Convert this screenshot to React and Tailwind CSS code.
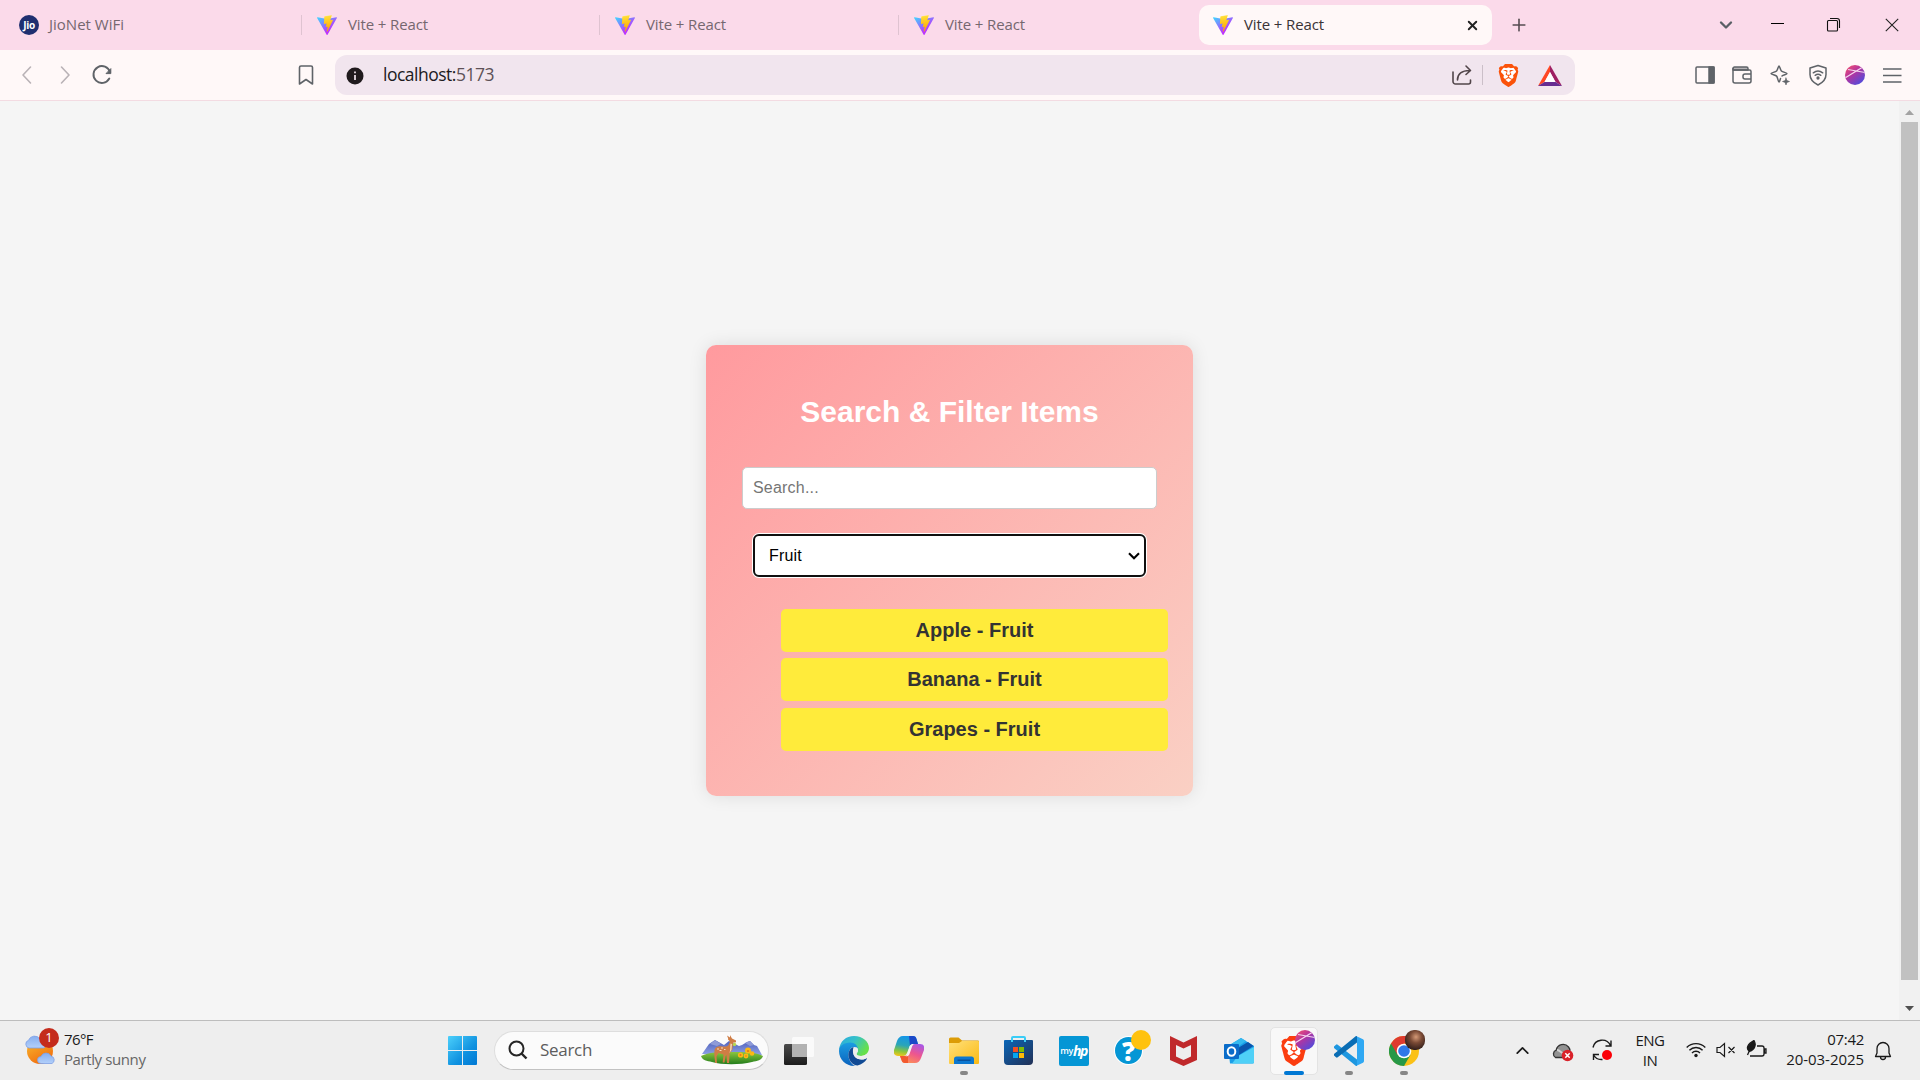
import React from "react";
import { SiBrave } from "react-icons/si";
import { ChevronDown, ChevronUp, Plus, X } from "lucide-react";

function ViteLogo() {
  return (
    <svg width="20" height="20" viewBox="0 0 256 257" className="shrink-0">
      <defs>
        <linearGradient id="va" x1="-.8%" x2="57.6%" y1="7.7%" y2="78.4%">
          <stop offset="0%" stopColor="#41D1FF" />
          <stop offset="100%" stopColor="#BD34FE" />
        </linearGradient>
        <linearGradient id="vb" x1="43.4%" x2="50.3%" y1="2.2%" y2="89%">
          <stop offset="0%" stopColor="#FFEA83" />
          <stop offset="8.3%" stopColor="#FFDD35" />
          <stop offset="100%" stopColor="#FFA800" />
        </linearGradient>
      </defs>
      <path fill="url(#va)" d="M255.153 37.938L134.897 252.976c-2.483 4.44-8.862 4.466-11.382.048L.875 37.958c-2.746-4.814 1.371-10.646 6.827-9.67l120.385 21.517a6.537 6.537 0 0 0 2.322-.004l117.867-21.483c5.438-.991 9.574 4.796 6.877 9.62Z" />
      <path fill="url(#vb)" d="M185.432.063L96.44 17.501a3.268 3.268 0 0 0-2.634 3.014l-5.474 92.456a3.268 3.268 0 0 0 3.997 3.378l24.777-5.718c2.318-.535 4.413 1.507 3.936 3.838l-7.361 36.047c-.495 2.426 1.782 4.5 4.151 3.78l15.304-4.649c2.372-.72 4.652 1.36 4.15 3.788l-11.698 56.621c-.732 3.542 3.979 5.473 5.943 2.437l1.313-2.028l72.516-144.72c1.215-2.423-.88-5.186-3.54-4.672l-25.505 4.922c-2.396.462-4.435-1.77-3.759-4.114l16.646-57.705c.677-2.35-1.37-4.583-3.769-4.113Z" />
    </svg>
  );
}

function TabBar() {
  return (
    <div className="flex h-[50px] items-center bg-[#fbdaea] text-[15px] tracking-[-0.12px] text-[#75676f]">
      <div className="flex w-[301px] items-center pl-[19px]">
        <div className="flex size-5 items-center justify-center rounded-full bg-[#1f2f70] text-[10px] font-bold tracking-[-0.3px] text-white">Jio</div>
        <span className="mb-[2px] ml-[10px] tracking-normal">JioNet WiFi</span>
      </div>
      {[0, 1, 2].map((i) => (
        <div key={i} className={i === 0 ? "flex w-[298px] items-center" : "flex w-[299px] items-center"}>
          <div className="h-5 w-px bg-[#dfc3d1]" />
          <div className="ml-[15px]"><ViteLogo /></div>
          <span className="mb-[2px] ml-[11px]">Vite + React</span>
        </div>
      ))}
      <div className="ml-[2px] flex h-10 w-[293px] items-center rounded-[10px] bg-[#fff8f8] pl-[14px] pr-[12px] text-[#3a3336]">
        <ViteLogo />
        <span className="mb-[2px] ml-[11px]">Vite + React</span>
        <X className="ml-auto size-[15px] text-[#222]" strokeWidth={3} />
      </div>
      <Plus className="ml-[17px] size-5 text-[#554c51]" strokeWidth={1.9} />
      <ChevronDown className="ml-[187px] size-5 text-[#5a5f66]" strokeWidth={2.8} />
      <div className="ml-[35px] mb-[3px] h-px w-[13px] bg-black" />
      <svg className="mb-[2px] ml-[42px]" width="15" height="15" viewBox="0 0 15 15" fill="none" stroke="#111" strokeWidth="1.100">
        <rect x="1.500" y="3.500" width="10" height="10.500" rx="1" />
        <path d="M4 1.500h7a2.500 2.500 0 0 1 2.500 2.500v7" />
      </svg>
      <svg className="mb-[1px] ml-[44px]" width="14" height="14" viewBox="0 0 14 14" stroke="#222" strokeWidth="1.1">
        <path d="M.8.8l12.4 12.4M13.2.8L.8 13.2" />
      </svg>
    </div>
  );
}

const line = { fill: "none", stroke: "#5f6368", strokeWidth: 1.6, strokeLinecap: "round", strokeLinejoin: "round" };
function Ic({ className, children, ...p }) {
  return (
    <svg width="24" height="24" viewBox="0 0 24 24" {...line} {...p} className={"shrink-0 " + (className || "")}>
      {children}
    </svg>
  );
}

function Avatar({ size, id }) {
  return (
    <svg width={size} height={size} viewBox="0 0 20 20" className="shrink-0">
      <defs>
        <linearGradient id={id} x1="0" y1="0" x2=".8" y2="1">
          <stop offset="0" stopColor="#fb5468" />
          <stop offset=".45" stopColor="#b4349f" />
          <stop offset="1" stopColor="#4a4de0" />
        </linearGradient>
        <clipPath id={id + "c"}><circle cx="10" cy="10" r="10" /></clipPath>
      </defs>
      <g clipPath={`url(#${id}c)`}>
        <rect width="20" height="20" fill={`url(#${id})`} />
        <path d="M0 13L17 2.500M3 4.500L20 7.500" stroke="#f3d3ee" strokeWidth="1.200" />
      </g>
    </svg>
  );
}

function Toolbar() {
  return (
    <div className="flex h-[51px] items-center border-b border-[#f3dbe2] bg-[#fff8f8]">
      <Ic className="ml-[15px]" stroke="#b9b2b6"><path d="M15.500 4L8 12l7.500 8" /></Ic>
      <Ic className="ml-[14px]" stroke="#b9b2b6"><path d="M8.500 4L16 12l-7.500 8" /></Ic>
      <Ic className="ml-[13px]" strokeWidth="1.900">
        <path d="M19.300 15.500A8.400 8.400 0 1 1 20 9.300" />
        <path d="M20.800 6v4.600h-4.400z" fill="#5f6368" strokeWidth="1" />
      </Ic>
      <Ic className="ml-[180px]"><path d="M5.500 4.500A1.500 1.500 0 0 1 7 3h10a1.500 1.500 0 0 1 1.500 1.500V21L12 16.500 5.500 21z" /></Ic>
      <div className="ml-[17px] flex h-10 w-[1240px] items-center rounded-[12px] bg-[#f1e5ee]">
        <svg className="ml-[11px] mt-[2px]" width="18" height="18" viewBox="0 0 18 18">
          <circle cx="9" cy="9" r="8.500" fill="#201a1d" />
          <path d="M9 8v5M9 4.600v1.700" stroke="#f1e5ee" strokeWidth="1.700" />
        </svg>
        <span className="mb-[1px] ml-[19px] text-[17.500px] tracking-[-0.500px] text-[#201a1d]">localhost:<span className="text-[#5d5157]">5173</span></span>
        <Ic className="ml-auto" stroke="#514549">
          <path d="M3 9v9.500A2.500 2.500 0 0 0 5.500 21h13a2 2 0 0 0 2-2v-2M7.500 17c0-6 4.500-9.500 12-9.500M16 3l4.500 4.500L16 11.500" />
        </Ic>
        <div className="ml-[8px] h-5 w-px bg-[#cbbfc8]" />
        <div className="ml-[15px] flex h-[23px] w-5 items-center justify-center">
          <div className="flex h-[19px] w-[15px] items-center justify-center rounded-b-[9px] rounded-t-[4px] bg-white">
            <SiBrave className="size-[23px] shrink-0 text-[#fb5209]" />
          </div>
        </div>
        <svg className="ml-[20px] mr-[13px]" width="24" height="21" viewBox="0 0 24 21">
          <path d="M12 0L0 21l6.500-4L12 7z" fill="#ff4724" />
          <path d="M12 0v7l5.500 10L24 21z" fill="#9e1f63" />
          <path d="M0 21h24l-6.500-4h-11z" fill="#662d91" />
          <path d="M12 7l5.500 10h-11z" fill="#fff" />
        </svg>
      </div>
      <Ic className="ml-[118px]" strokeWidth="1.500">
        <rect x="3" y="4" width="18" height="16" rx="1" />
        <path d="M16 4h5v16h-5z" fill="#5f6368" />
      </Ic>
      <Ic className="ml-[13px]" strokeWidth="1.500">
        <path d="M3 5.500A1.500 1.500 0 0 1 4.500 4h12A1.500 1.500 0 0 1 18 5.500V7H3z" fill="#b5b2b5" />
        <path d="M3 5.500V18a2 2 0 0 0 2 2h14a2 2 0 0 0 2-2V8.500A1.500 1.500 0 0 0 19.500 7H4M21 11h-6a2 2 0 0 0-2 2v1a2 2 0 0 0 2 2h6" />
      </Ic>
      <Ic className="ml-[14px]" strokeWidth="1.500">
        <path d="M11 3c.8 0 1.200 3.800 2.400 5 1.200 1.200 5.600 1.600 5.600 2.500 0 1-3.800 1.300-5 2.500M11 3c-.8 0-1.200 3.800-2.400 5C7.400 9.200 3 9.600 3 10.500c0 1 4.400 1.400 5.600 2.600C9.800 14.300 10 19 11 19c.7 0 .9-1.800 1.500-3.500" />
        <path d="M18 15l.9 2.600 2.600.9-2.600.9L18 22l-.9-2.600-2.600-.9 2.600-.9z" fill="#5f6368" strokeWidth=".6" />
      </Ic>
      <Ic className="ml-[14px]" strokeWidth="1.500">
        <path d="M12 2.500L20 5v6.500c0 4.500-3 8-8 10.500-5-2.500-8-6-8-10.500V5z" />
        <path d="M7.300 9.800a8 8 0 0 1 9.400 0M9.200 12.300a5 5 0 0 1 5.600 0" />
        <circle cx="12" cy="15" r=".9" fill="#5f6368" />
      </Ic>
      <div className="ml-[15px]"><Avatar size={20} id="av1" /></div>
      <Ic className="ml-[15px] mt-[2px]" strokeWidth="1.700" strokeLinecap="butt"><path d="M3 5h18.500M3 11.500h18.500M3 18h18.500" /></Ic>
    </div>
  );
}

function Content() {
  return (
    <div className="flex h-[919px] bg-[#f5f5f5] font-['Liberation_Sans',Arial,sans-serif]">
      <div className="flex flex-1 flex-col items-center pt-[244px]">
        <div className="h-[451px] w-[487px] rounded-[10px] bg-[linear-gradient(135deg,#ff9a9e_0%,#fad0c4_100%)] pt-[50px] shadow-[0_0_18px_rgba(0,0,0,0.1)]">
          <h1 className="text-center text-[30px] font-bold leading-[34px] text-white">Search &amp; Filter Items</h1>
          <input
            placeholder="Search..."
            className="mx-auto mt-[38px] block h-[42px] w-[415px] rounded-[5px] border border-[#ccc] bg-white px-[10px] text-[16px] tracking-[0.2px] placeholder:text-[#757575]"
          />
          <div className="mx-auto mt-[25px] flex h-[43px] w-[393px] items-center justify-between rounded-[6px] border-2 border-[#101010] bg-white pl-[14px] pr-[4px] text-[16px] text-black shadow-[0_0_0_1px_#fff]">
            <span className="tracking-[0.2px]">Fruit</span>
            <svg width="12" height="8" viewBox="0 0 12 8" fill="none" stroke="#000" strokeWidth="2.100"><path d="M1 1.200l5 5 5-5" /></svg>
          </div>
          <ul className="ml-[75px] mt-[32px] w-[387px] text-center text-[20px] font-bold text-[#333]">
            <li className="h-[43px] rounded-[5px] bg-[#ffeb3b] leading-[42px]">Apple - Fruit</li>
            <li className="mt-1.5 h-[43px] rounded-[5px] bg-[#ffeb3b] leading-[42px]">Banana - Fruit</li>
            <li className="mt-[7px] h-[43px] rounded-[5px] bg-[#ffeb3b] leading-[42px]">Grapes - Fruit</li>
          </ul>
        </div>
      </div>
      <div className="flex w-[21px] flex-col items-center bg-[#f1f1f1]">
        <svg className="mt-[9px]" width="9" height="5" viewBox="0 0 9 5"><path d="M0 5l4.500-5L9 5z" fill="#a3a3a3" /></svg>
        <div className="mt-[7px] h-[858px] w-[17px] bg-[#c1c1c1]" />
        <svg className="mt-[26px]" width="9" height="5" viewBox="0 0 9 5"><path d="M0 0l4.500 5L9 0z" fill="#505050" /></svg>
      </div>
    </div>
  );
}

function App55({ children, dot, active }) {
  return (
    <div className="flex h-full w-[55px] items-center justify-center">
      <div className={active ? "relative flex size-12 items-center justify-center rounded-[5px] border border-[#e3e3e3] bg-[#f8f8f8]" : "relative flex size-12 items-center justify-center"}>
        {children}
        {dot && <div className="absolute bottom-0 left-1/2 h-1 w-2 -translate-x-1/2 rounded-full bg-[#868686]" />}
        {active && <div className="absolute -bottom-px left-1/2 h-1 w-5 -translate-x-1/2 rounded-full bg-[#0078d4]" />}
      </div>
    </div>
  );
}

function Deer() {
  return (
    <svg width="62" height="30" viewBox="0 0 62 30" className="shrink-0">
      <defs>
        <linearGradient id="grass" x1="0" y1="0" x2="0" y2="1"><stop offset="0" stopColor="#8cc63f" /><stop offset="1" stopColor="#227d1c" /></linearGradient>
        <linearGradient id="mt" x1="0" y1="0" x2="0" y2="1"><stop offset="0" stopColor="#4b5cb8" /><stop offset="1" stopColor="#8fa3e6" /></linearGradient>
      </defs>
      <path d="M1 19L8 9l6-4 9 5 5-4 10 5 3-1 5-3 3-1 4 4 3 1 5 9z" fill="url(#mt)" />
      <path d="M9 9l5-4 6 4-4 2zM49 6l4 4-4 1-5-3z" fill="#8f9bd8" />
      <path d="M0 21c8-4 18-4 31-4s24 0 31 4c-1 4-6 5-11 6-12 3-30 3-40 0-5-1-10-2-11-6z" fill="url(#grass)" />
      <path d="M13.500 15c1-4 5-4 8-3.500 3 .2 5 0 6-1.500L29 6.500l-2-2 .2-1L26 .500l3 2L29 0l2 3.500 4 2v1.700l-3 .6-.3 4.700c-.3 3-1.700 4.500-3 5.500L28 28h-2l-.5-8-1 1-1 6.500h-1.800l.8-8-5-1.500-2 3.500L16 28h-1.800l-.7-6-.2-3z" fill="#cf7d45" />
      <path d="M16 14h2M20 13h2M18.500 15.500h2M23 14.500h1.500" stroke="#f7dcc0" strokeWidth="1" />
      <path d="M29.500 8.500l1.500.5-.5 6-2 3c1-3 .5-6 1-9.500z" fill="#f3d9bd" />
      <g fill="#fbb816"><circle cx="39.500" cy="20" r="2.600" /><circle cx="47" cy="15.500" r="3" /><circle cx="45" cy="21" r="2.400" /><circle cx="51" cy="18.500" r="2.300" /></g>
      <g fill="#e27b12"><circle cx="39.500" cy="20" r="1" /><circle cx="47" cy="16" r="1.100" /><circle cx="45" cy="21" r=".8" /></g>
      <circle cx="33.500" cy="9.500" r="1.700" fill="#b9d84e" />
    </svg>
  );
}

function Edge() {
  return (
    <svg width="30" height="30" viewBox="0 0 30 30">
      <defs>
        <linearGradient id="e1" x1="0" y1="0" x2="1" y2=".5"><stop offset="0" stopColor="#2aa8e0" /><stop offset=".5" stopColor="#35c1c9" /><stop offset="1" stopColor="#66e04a" /></linearGradient>
        <linearGradient id="e2" x1="0" y1="0" x2="0" y2="1"><stop offset="0" stopColor="#1b9de2" /><stop offset="1" stopColor="#0b62bd" /></linearGradient>
      </defs>
      <path d="M0 14C1 5 7 0 15 0c9 0 15 6 15 12 0 5-4 8-8 8-3 0-4.500-1-4.500-2s1.500-1.500 1.500-4c0-3-3-5-7-5-6 0-11 3-12 5z" fill="url(#e1)" />
      <path d="M0 15c0-5 5-8.500 11-8.500 5 0 8 3 8 7.500 0-2-2-3-4-3-3 0-5.500 3.500-5.500 8C9.500 25 14 30 17 30h-2C7 30 0 23.500 0 15z" fill="url(#e2)" />
      <path d="M14.500 11C11 12 9 16 9.500 20c.6 5.500 5 9.500 9 9.500 4-.7 7.500-3.500 9.300-6.500.3-.6-.3-.9-.8-.6-7 3.500-15.500-1-12.500-11.400z" fill="#114a94" />
      <path d="M19 14c0 2.500-1.500 3-1.500 4s1.500 2 4.500 2c2 0 5-1 6.800-3.200 1 1.200-.3 4.200-1.800 5.600-5 2.500-12 0-12.500-5C14.300 14.500 15 12 17 11.200c1.200.3 2 1.500 2 2.800z" fill="#eee" />
    </svg>
  );
}

function Copilot() {
  return (
    <svg width="30" height="28" viewBox="0 0 30 28">
      <defs>
        <linearGradient id="c1" x1=".4" y1="0" x2=".2" y2="1"><stop offset="0" stopColor="#1496e8" /><stop offset=".45" stopColor="#2aa5b8" /><stop offset=".75" stopColor="#8ac63c" /><stop offset="1" stopColor="#f5c61a" /></linearGradient>
        <linearGradient id="c2" x1=".8" y1="0" x2=".3" y2="1"><stop offset="0" stopColor="#a857e6" /><stop offset=".5" stopColor="#ee568e" /><stop offset="1" stopColor="#fd9156" /></linearGradient>
      </defs>
      <path d="M9 0h10c2 0 3 1 3.500 3L24 8h-4c-3 0-4 1-5 4l-2 5c-1 2-2 3-4 3H4c-3 0-5-2-4-6l3-9c1-3 3-5 6-5z" fill="url(#c1)" />
      <path d="M15 0h4c2 0 3 1 3.500 3L24 8h-4c-2 0-3 .5-4 2z" fill="#1b48c8" />
      <path d="M21 27H11c-2 0-3-1-3.500-3L6 20h4c3 0 4-1 5-4l2-5c1-2 2-3 4-3h5c3 0 5 2 4 6l-3 8c-1 3-3 5-6 5z" fill="url(#c2)" />
      <path d="M14 27h-3c-2 0-3-1-3.500-3L6 20h4c2 0 3-.5 4-2z" fill="#f2592f" />
      <path d="M15.500 10.500c.8-2 2-2.500 4-2.500l-1.200 2-2.800 8c-.7 1.800-2 2.500-4 2.300 1-.6 1.500-1.500 2-2.800z" fill="#f3f3f3" />
    </svg>
  );
}

function Weather() {
  return (
    <svg width="36" height="36" viewBox="0 0 36 36">
      <defs>
        <linearGradient id="sun" x1="0" y1="0" x2=".5" y2="1"><stop offset="0" stopColor="#f8bf30" /><stop offset="1" stopColor="#f2700f" /></linearGradient>
        <linearGradient id="cl" x1="0" y1="0" x2="0" y2="1"><stop offset="0" stopColor="#86aef0" /><stop offset="1" stopColor="#b3d0fa" /></linearGradient>
      </defs>
      <circle cx="15" cy="21" r="13" fill="url(#sun)" />
      <path d="M4 18a4 4 0 0 1-.5-7.700A6.500 6.500 0 0 1 15 9a5 5 0 0 1 4 9z" fill="url(#cl)" stroke="#7da0e4" strokeWidth=".8" />
      <path d="M16 33.500a3.500 3.500 0 0 1 0-7A5.500 5.500 0 0 1 26 26a4 4 0 0 1 1 7.500z" fill="url(#cl)" stroke="#7da0e4" strokeWidth=".8" />
    </svg>
  );
}

function Taskbar() {
  return (
    <div className="flex h-[60px] items-center border-t border-[#bdbdbd] bg-[#eee] text-[15px] text-[#1a1a1a]">
      <div className="relative mb-[5px] ml-[25px]">
        <Weather />
        <div className="absolute -top-[2px] left-[14px] flex size-[20px] items-center justify-center rounded-full bg-[#c42b1c] text-[13px] text-white">1</div>
      </div>
      <div className="mb-[4px] ml-[3px] w-[90px] leading-5 tracking-[-0.4px]">
        <div className="tracking-[-0.6px]">76°F</div>
        <div className="whitespace-nowrap text-[#666]">Partly sunny</div>
      </div>
      <svg className="ml-[294px]" width="29" height="29" viewBox="0 0 29 29">
        <defs>
          <linearGradient id="win" gradientUnits="userSpaceOnUse" x1="0" y1="0" x2="29" y2="29"><stop offset="0" stopColor="#4cd0fb" /><stop offset=".6" stopColor="#1092e0" /><stop offset="1" stopColor="#0078d4" /></linearGradient>
        </defs>
        <path d="M0 1a1 1 0 0 1 1-1h13v14H0zM15 0h13a1 1 0 0 1 1 1v13H15zM0 15h14v14H1a1 1 0 0 1-1-1zM15 15h14v13a1 1 0 0 1-1 1H15z" fill="url(#win)" />
      </svg>
      <div className="mb-[1px] ml-[17px] flex h-[39px] w-[275px] items-center rounded-full border border-[#dedede] border-b-[#c2c2c2] bg-[#fbfbfb]">
        <svg className="ml-[13px]" width="20" height="20" viewBox="0 0 20 20" fill="none" stroke="#252525" strokeWidth="2">
          <circle cx="8.500" cy="8.500" r="7" /><path d="M13.500 13.500l5 5" strokeWidth="2.400" />
        </svg>
        <span className="ml-[12px] text-[17px] tracking-[-0.300px] text-[#5d5d5d]">Search</span>
        <div className="ml-auto mr-[5px]"><Deer /></div>
      </div>
      <div className="ml-[2px] flex h-full items-center">
        <App55>
          <svg width="30" height="28" viewBox="0 0 30 28">
            <defs><linearGradient id="tv" x1="0" y1="0" x2="0" y2="1"><stop offset="0" stopColor="#4a4a4a" /><stop offset="1" stopColor="#1c1c1c" /></linearGradient></defs>
            <rect x="0" y="7" width="23" height="21" rx="1.500" fill="url(#tv)" />
            <rect x="8" y="0" width="22" height="20" rx="1.500" fill="#fafafa" />
            <rect x="8" y="7" width="15" height="13" fill="#b2b2b2" />
          </svg>
        </App55>
        <App55><Edge /></App55>
        <App55><div className="mb-px"><Copilot /></div></App55>
        <App55 dot>
          <svg width="30" height="27" viewBox="0 0 30 27">
            <defs><linearGradient id="fo" x1="0" y1="0" x2="1" y2="1"><stop offset="0" stopColor="#ffe07a" /><stop offset="1" stopColor="#fbba14" /></linearGradient></defs>
            <path d="M0 2a1.500 1.500 0 0 1 1.500-1.500h8L13 3.500h16a1 1 0 0 1 1 1V9H0z" fill="#dc9c07" />
            <path d="M0 6h10l3-2h16a1 1 0 0 1 1 1v21a1 1 0 0 1-1 1H1a1 1 0 0 1-1-1z" fill="url(#fo)" />
            <path d="M5 27v-5a2.500 2.500 0 0 1 2.500-2.500h15A2.500 2.500 0 0 1 25 22v5z" fill="#0d78d0" />
            <path d="M8.500 23.200h13" stroke="#0a4f98" strokeWidth="1.400" />
          </svg>
        </App55>
        <App55>
          <svg width="29" height="29" viewBox="0 0 29 29">
            <defs><linearGradient id="st" x1="0" y1="0" x2="1" y2="1"><stop offset="0" stopColor="#0a66b8" /><stop offset="1" stopColor="#223055" /></linearGradient></defs>
            <path d="M0 5a1 1 0 0 1 1-1h27a1 1 0 0 1 1 1v20a4 4 0 0 1-4 4H4a4 4 0 0 1-4-4z" fill="url(#st)" />
            <path d="M8 6V2a1 1 0 0 1 1-1h11a1 1 0 0 1 1 1v4" fill="none" stroke="#3acdf7" strokeWidth="2" />
            <path d="M9 11h5v5H9z" fill="#f35022" /><path d="M15 11h5v5h-5z" fill="#80bb02" /><path d="M9 17h5v5H9z" fill="#05a6f0" /><path d="M15 17h5v5h-5z" fill="#ffba07" />
          </svg>
        </App55>
        <App55>
          <div className="flex size-[30px] items-center justify-center rounded-[2px] bg-[#0596d5] text-white">
            <span className="text-[9px] font-semibold tracking-[-0.3px]">my</span><span className="text-[14px] font-bold italic tracking-[-1.5px]">hp</span>
          </div>
        </App55>
        <App55>
          <div className="flex size-[27px] items-center justify-center rounded-full bg-[#0596d5] text-[26px] font-extrabold leading-none text-white ring-1 ring-white">?</div>
          <div className="absolute right-[2px] top-[3px] size-5 rounded-full bg-[#ffc20e]" />
        </App55>
        <App55>
          <svg width="27" height="30" viewBox="0 0 27 30">
            <path d="M0 0l13.500 6.500L27 0v24l-13.500 6L0 24z" fill="#c0292b" /><path d="M6 9l7.500 3.500L21 9v11.500l-7.500 3.500L6 20.500z" fill="#eee" />
          </svg>
        </App55>
        <App55>
          <svg width="30" height="27" viewBox="0 0 30 27">
            <path d="M4 9L17 1l13 8v16a1.500 1.500 0 0 1-1.500 1.500H6z" fill="#1a9fe8" />
            <path d="M4 9L17 1l5 3L8 14z" fill="#35b9ef" /><path d="M14 11l10-6 5.500 4L15 18z" fill="#0c55ac" /><path d="M14 19l16-9v15a1.500 1.500 0 0 1-1.500 1.500H8z" fill="#4fd0f7" />
            <rect x="0" y="7" width="15" height="15" rx="1" fill="#0a6cc9" /><ellipse cx="7.500" cy="14.500" rx="3.800" ry="4.200" fill="none" stroke="#fff" strokeWidth="2" />
          </svg>
        </App55>
        <App55 active>
          <div className="flex h-[24px] w-[18px] items-center justify-center rounded-b-[10px] bg-white"><SiBrave className="size-[30px] shrink-0 text-[#fb3d10]" /></div>
          <div className="absolute right-[2px] top-[2px]"><Avatar size={20} id="av2" /></div>
        </App55>
        <App55 dot>
          <svg width="30" height="30" viewBox="0 0 30 30">
            <path d="M0 10.500l2-1.800a1.300 1.300 0 0 1 1.700 0L23 23.500V30h-1L.3 12.200a1.200 1.200 0 0 1-.3-1.700z" fill="#1e97e0" />
            <path d="M0 19.500l2 1.800a1.300 1.300 0 0 0 1.700 0L23 6.500V0h-1L.3 17.800a1.200 1.200 0 0 0-.3 1.700z" fill="#0a6db4" />
            <path d="M22 0l7 3.300a1.800 1.800 0 0 1 1 1.600v20.200a1.800 1.800 0 0 1-1 1.600L22 30c.6-.4 1-1 1-2V2c0-1-.4-1.600-1-2z" fill="#2fa8f3" />
          </svg>
        </App55>
        <App55 dot>
          <svg width="30" height="30" viewBox="0 0 30 30">
            <circle cx="15" cy="15" r="15" fill="#fbc116" />
            <path d="M2 7.500A15 15 0 0 0 15 30l6.500-11.250L15 15z" fill="#279847" />
            <path d="M2 7.500A15 15 0 0 1 28 7.500H15l-6.500 11.250z" fill="#de3b2f" />
            <circle cx="15" cy="15" r="7.300" fill="#fff" /><circle cx="15" cy="15" r="5.800" fill="#2f78e8" />
          </svg>
          <div className="absolute right-[3px] top-[3px] size-5 rounded-[9px] bg-[radial-gradient(circle_at_55%_35%,#d59a77_0%,#7a4a35_35%,#2a1a18_80%)]" />
        </App55>
      </div>
      <ChevronUp className="ml-[81px] size-[21px]" strokeWidth={2} />
      <svg className="ml-[19px] mt-[2px]" width="22" height="20" viewBox="0 0 22 20">
        <path d="M3.500 15.500a4 4 0 0 1 .7-7.300A7 7 0 0 1 16.500 5c2.500 3 1 6-1 8l-3 2.500z" fill="#929292" stroke="#333" strokeWidth="1.300" />
        <path d="M5 8c3 0 6 5 10 5" stroke="#d2d2d2" strokeWidth="2" fill="none" />
        <circle cx="15.500" cy="13.500" r="5.800" fill="#d9222a" /><path d="M13.300 11.300l4.400 4.400M17.700 11.300l-4.400 4.400" stroke="#fff" strokeWidth="1.500" />
      </svg>
      <svg className="mb-[1px] ml-[17px]" width="22" height="22" viewBox="0 0 22 22" fill="none" stroke="#1a1a1a" strokeWidth="1.400">
        <path d="M2 8.500A9.300 9.300 0 0 1 19.500 6.500M20 1.500v5.500h-5.500M2.500 21v-5.500H8M2.500 16a9.300 9.300 0 0 0 9 4.500" />
        <circle cx="16" cy="16" r="5" fill="#fb0007" stroke="none" />
      </svg>
      <div className="mb-[2px] ml-[15px] w-[44px] text-center leading-5 tracking-[-0.5px]"><div>ENG</div><div>IN</div></div>
      <svg className="mb-[2px] ml-[14px]" width="20" height="16" viewBox="0 0 20 16" fill="none" stroke="#1a1a1a" strokeWidth="1.400">
        <path d="M.7 5.500a13 13 0 0 1 18.600 0M3.400 8.300a9.300 9.300 0 0 1 13.200 0M6 11a5.600 5.600 0 0 1 8 0" /><circle cx="10" cy="13.500" r="1.700" fill="#1a1a1a" stroke="none" />
      </svg>
      <svg className="mb-[1px] ml-[10px]" width="20" height="16" viewBox="0 0 20 16" fill="none" stroke="#1a1a1a" strokeWidth="1.200">
        <path d="M1 5.500h3L8.500 1.500v13L4 10.500H1zM12.500 5l6 6M18.500 5l-6 6" />
      </svg>
      <svg className="mb-[4px] ml-[10px]" width="21" height="18" viewBox="0 0 21 18" fill="none" stroke="#1a1a1a" strokeWidth="1.300">
        <path d="M11 6h5a2 2 0 0 1 2 2v6a2 2 0 0 1-2 2H4M18.500 9v4h1.500V9z" />
        <path d="M8 .5c2.500 4 1 9-4.500 11C-.5 8.500 1.500 4 8 .5z" fill="#1a1a1a" /><path d="M1.500 15L5 7" stroke="#1a1a1a" />
      </svg>
      <div className="mb-[4px] ml-[9px] w-[88px] text-right leading-5"><div className="tracking-[-0.300px]">07:42</div><div className="whitespace-nowrap tracking-[-0.050px]">20-03-2025</div></div>
      <svg className="ml-[10px]" width="18" height="20" viewBox="0 0 18 20" fill="none" stroke="#1a1a1a" strokeWidth="1.300">
        <path d="M1.500 15.500L3 12V7.500a6 6 0 0 1 12 0V12l1.500 3.500zM6.500 16a2.500 2.500 0 0 0 5 0" strokeLinejoin="round" />
      </svg>
    </div>
  );
}

export default function App() {
  return (
    <div className="flex h-[1080px] w-[1920px] flex-col overflow-hidden font-['Open_Sans','Noto_Sans',sans-serif]">
      <TabBar />
      <Toolbar />
      <Content />
      <Taskbar />
    </div>
  );
}
